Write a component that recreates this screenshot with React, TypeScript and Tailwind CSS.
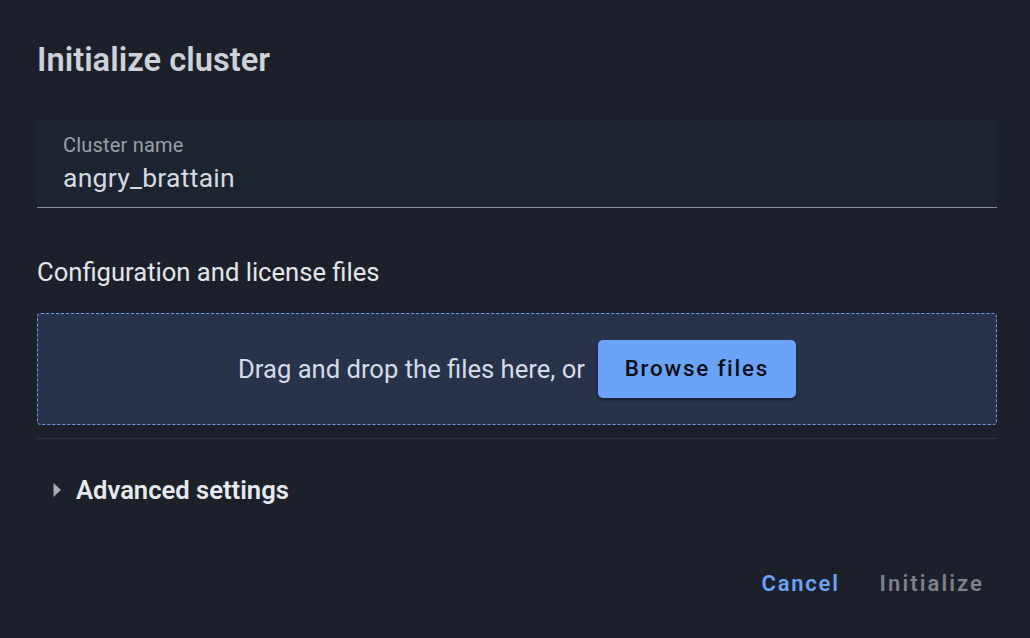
import { useState } from "react";

export default function App() {
  const [name, setName] = useState("angry_brattain");
  const [open, setOpen] = useState(false);

  return (
    <div className="h-[638px] w-[1030px] overflow-hidden bg-[#1b202b] pl-[37px] pr-[33px] pt-[40px] font-['Roboto',sans-serif]">
      <h1 className="text-[32.7px] font-semibold leading-[40px] text-[#cdd2da]">
        Initialize cluster
      </h1>

      <div className="mt-[40px] flex h-[88px] flex-col border-b border-[#8b8e95] bg-[#1c2431] px-[26px] pt-[13px]">
        <label className="text-[20px] leading-[24px] tracking-[0.01em] text-[#9aa0a8]">
          Cluster name
        </label>
        <input
          value={name}
          onChange={(e) => setName(e.target.value)}
          className="mt-[5px] bg-transparent text-[26.5px] leading-[32px] tracking-[0.01em] text-[#d6dae0] outline-none"
        />
      </div>

      <p className="mt-[49px] text-[25.6px] leading-[30px] text-[#e3e6ea]">
        Configuration and license files
      </p>

      <div className="mt-[26px] flex h-[112px] items-center justify-center gap-[13px] rounded-[4px] border border-dashed border-[#6a9ef0] bg-[#26334b]">
        <span className="text-[25.6px] text-[#d5dce8]">
          Drag and drop the files here, or
        </span>
        <button
          type="button"
          className="h-[58px] w-[198px] rounded-[5px] bg-[#6ba3f8] text-[22.4px] font-medium tracking-[0.08em] text-[#0b0f16] shadow-[0_2px_3px_rgba(0,0,0,0.35)]"
        >
          Browse files
        </button>
      </div>

      <div className="mt-[13px] h-px bg-[#2f3441]" />

      <button
        type="button"
        onClick={() => setOpen(!open)}
        className="mt-[36px] flex items-center gap-[14px] pl-[15px]"
      >
        <svg
          width="10"
          height="16"
          viewBox="0 0 10 16"
          className={open ? "rotate-90 text-[#a8acb3]" : "text-[#a8acb3]"}
        >
          <path d="M1.5 1 L9 8 L1.5 15 Z" fill="currentColor" />
        </svg>
        <span className="text-[25.6px] font-semibold leading-[30px] text-[#e6e9ee]">
          Advanced settings
        </span>
      </button>

      <div className="mt-[64px] flex justify-end gap-[40px] pr-[13px]">
        <button
          type="button"
          className="text-[22px] font-semibold leading-[30px] tracking-[0.08em] text-[#6ea4f4]"
        >
          Cancel
        </button>
        <button
          type="button"
          disabled
          className="text-[22px] font-semibold leading-[30px] tracking-[0.095em] text-[#7e8189]"
        >
          Initialize
        </button>
      </div>
    </div>
  );
}
